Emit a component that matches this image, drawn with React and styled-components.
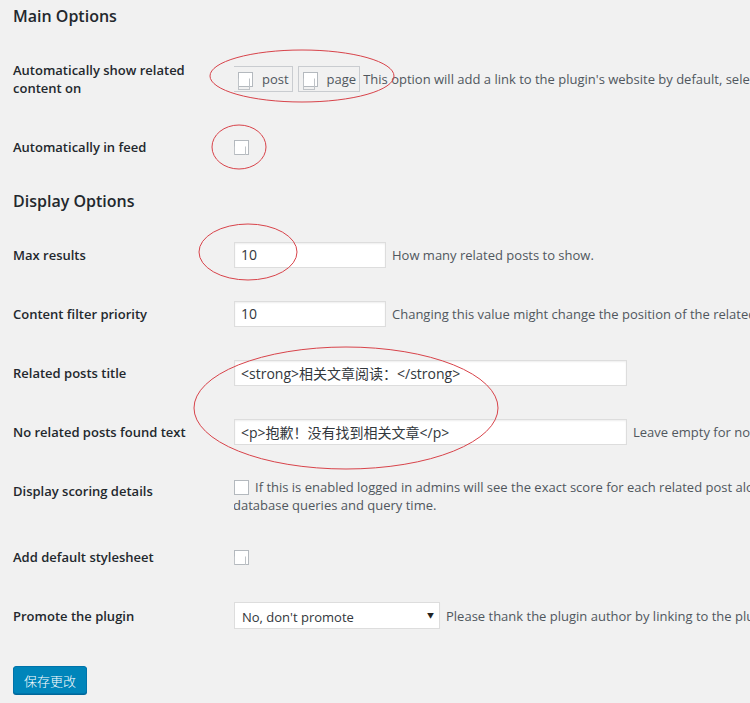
import styled, {createGlobalStyle} from "styled-components"

const GlobalStyle = createGlobalStyle`
    html, body {
        margin: 0;
        background: #f1f1f1;
        overflow: hidden;
    }
    body {
        font-family: "Open Sans", "Noto Sans CJK SC", sans-serif;
        color: #23282d;
        font-size: 13px;
    }
`

const Page = styled.div`
    position: relative;
    width: 750px;
    height: 703px;
    padding: 0 0 0 13px;
    box-sizing: border-box;
    overflow: hidden;
`

const SectionTitle = styled.h2`
    margin: 0 0 ${p => p.$after}px;
    font-size: 16px;
    font-weight: 600;
    line-height: ${p => p.$lh}px;
    color: #23282d;
`

const Row = styled.div`
    display: grid;
    grid-template-columns: 221px 1fr;
    height: ${p => p.$h}px;
    align-items: ${p => (p.$top ? "start" : "center")};
`

const Label = styled.div`
    font-size: 13px;
    font-weight: 600;
    line-height: 18px;
    padding-top: ${p => p.$pad || 0}px;
    white-space: nowrap;
`

const Field = styled.div`
    display: flex;
    align-items: center;
    gap: 6px;
    white-space: nowrap;
    overflow: hidden;
`

const Stack = styled.div`
    padding-top: 17px;
    overflow: hidden;
`

const Description = styled.span`
    font-size: 13px;
    color: #50575e;
    line-height: 18px;
    white-space: nowrap;
    margin-left: ${p => p.$shift || 0}px;
`

const Wrapped = styled.div`
    font-size: 13px;
    color: #50575e;
    line-height: 18px;
    white-space: nowrap;
    margin-left: -1px;
`

const TextInput = styled.div`
    box-sizing: border-box;
    width: ${p => p.$w}px;
    height: 26px;
    padding: 0 6px;
    display: flex;
    align-items: center;
    background: #fff;
    border: 1px solid #ddd;
    box-shadow: inset 0 1px 2px rgba(0, 0, 0, 0.07);
    font-size: 14px;
    color: #32373c;
    flex-shrink: 0;
`

const Box = styled.span`
    position: relative;
    display: inline-block;
    width: 15px;
    height: 15px;
    box-sizing: border-box;
    border: 1px solid #b4b9be;
    background: #fff;
    flex-shrink: 0;

    ${p => p.$ghost && `
        &::after {
            content: "";
            position: absolute;
            left: -1px;
            top: 5px;
            width: 10px;
            height: 10px;
            border: 1px solid #bfc3c7;
            border-top-color: transparent;
        }
    `}
`

const Choice = styled.label`
    display: flex;
    align-items: center;
    gap: 9px;
    height: 26px;
    box-sizing: border-box;
    padding: 0 3px 0 4px;
    border: 1px solid #c9ccd0;
    font-size: 13px;
    color: #50575e;
`

const Choices = styled.div`
    display: flex;
    align-items: center;
    gap: 5px;
    margin-left: -1px;
    flex-shrink: 0;
`

const Select = styled.div`
    box-sizing: border-box;
    width: 206px;
    height: 27px;
    padding: 2px 5px 0 7px;
    display: flex;
    align-items: center;
    justify-content: space-between;
    background: #fff;
    border: 1px solid #ddd;
    box-shadow: 0 1px 1px rgba(0, 0, 0, 0.04);
    font-size: 13px;
    color: #32373c;
    flex-shrink: 0;
`

const Arrow = styled.span`
    font-size: 7px;
    color: #222;
    margin-top: -3px;
`

const SaveButton = styled.button`
    margin-top: 21px;
    width: 74px;
    height: 28px;
    background: #0085ba;
    border: 1px solid #0073aa;
    border-radius: 3px;
    box-shadow: 0 1px 0 #006799;
    color: #fff;
    font-family: "Noto Sans CJK SC", sans-serif;
    font-size: 13px;
    font-weight: 300;
    padding: 0;
`

const Marks = styled.svg`
    position: absolute;
    left: 0;
    top: 0;
    pointer-events: none;
`

const ellipses = [
    {cx: 302, cy: 76, rx: 92, ry: 26},
    {cx: 239, cy: 147, rx: 27, ry: 22},
    {cx: 248, cy: 252, rx: 49, ry: 28},
    {cx: 346, cy: 408, rx: 152, ry: 61},
]

export default function App() {
    return (
        <Page>
            <GlobalStyle/>
            <SectionTitle $lh={32} $after={13}>Main Options</SectionTitle>

            <Row $h={68}>
                <Label>Automatically show related<br/>content on</Label>
                <Field>
                    <Choices>
                        <Choice><Box $ghost/>post</Choice>
                        <Choice><Box $ghost/>page</Choice>
                    </Choices>
                    <Description $shift={-3}>This option will add a link to the plugin's website by default, select which post types</Description>
                </Field>
            </Row>

            <Row $h={68}>
                <Label>Automatically in feed</Label>
                <Field><Box $ghost/></Field>
            </Row>

            <SectionTitle $lh={40} $after={4}>Display Options</SectionTitle>

            <Row $h={59}>
                <Label>Max results</Label>
                <Field>
                    <TextInput $w={152}>10</TextInput>
                    <Description>How many related posts to show.</Description>
                </Field>
            </Row>

            <Row $h={59}>
                <Label>Content filter priority</Label>
                <Field>
                    <TextInput $w={152}>10</TextInput>
                    <Description>Changing this value might change the position of the related posts</Description>
                </Field>
            </Row>

            <Row $h={59}>
                <Label>Related posts title</Label>
                <Field>
                    <TextInput $w={393}>&lt;strong&gt;相关文章阅读：&lt;/strong&gt;</TextInput>
                </Field>
            </Row>

            <Row $h={59}>
                <Label>No related posts found text</Label>
                <Field>
                    <TextInput $w={393}>&lt;p&gt;抱歉！没有找到相关文章&lt;/p&gt;</TextInput>
                    <Description>Leave empty for no text</Description>
                </Field>
            </Row>

            <Row $h={67} $top>
                <Label $pad={21}>Display scoring details</Label>
                <Stack>
                    <Field>
                        <Box/>
                        <Description>If this is enabled logged in admins will see the exact score for each related post along with the</Description>
                    </Field>
                    <Wrapped>database queries and query time.</Wrapped>
                </Stack>
            </Row>

            <Row $h={58}>
                <Label>Add default stylesheet</Label>
                <Field><Box $ghost/></Field>
            </Row>

            <Row $h={59}>
                <Label>Promote the plugin</Label>
                <Field>
                    <Select>No, don't promote<Arrow>▼</Arrow></Select>
                    <Description>Please thank the plugin author by linking to the plugin</Description>
                </Field>
            </Row>

            <SaveButton>保存更改</SaveButton>

            <Marks width="750" height="703" viewBox="0 0 750 703">
                {ellipses.map((e, i) => (
                    <ellipse key={i} {...e} fill="none" stroke="#d8434a" strokeWidth="1"/>
                ))}
            </Marks>
        </Page>
    )
}
